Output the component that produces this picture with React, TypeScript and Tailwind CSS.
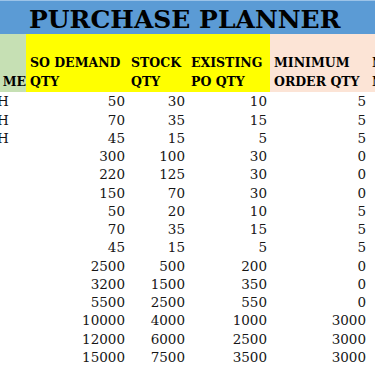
// Purchase planner sheet excerpt

const rows: [number, number, number, number][] = [
  [50, 30, 10, 5],
  [70, 35, 15, 5],
  [45, 15, 5, 5],
  [300, 100, 30, 0],
  [220, 125, 30, 0],
  [150, 70, 30, 0],
  [50, 20, 10, 5],
  [70, 35, 15, 5],
  [45, 15, 5, 5],
  [2500, 500, 200, 0],
  [3200, 1500, 350, 0],
  [5500, 2500, 550, 0],
  [10000, 4000, 1000, 3000],
  [12000, 6000, 2500, 3000],
  [15000, 7500, 3500, 3000],
]

const cols = 'grid grid-cols-[26px_102px_60px_82px_100px_1fr]'

export default function App() {
  return (
    <div
      className="h-[366px] w-[375px] overflow-hidden bg-white text-black"
      style={{ fontFamily: '"DejaVu Serif", "Liberation Serif", serif' }}
    >
      {/* Title */}
      <div className="flex h-[34px] items-center border-t border-[#9cc3e8] bg-[#5b9bd5] pl-[29px] pt-[3px]">
        <h1 className="whitespace-nowrap text-[25px] font-bold leading-none">
          PURCHASE PLANNER
        </h1>
      </div>

      {/* Header */}
      <div className={`${cols} h-[58px] text-[12.5px] font-bold leading-[18.5px]`}>
        <div className="flex items-end justify-end overflow-hidden bg-[#c6e0b4] pb-[1px]">
          <span className="whitespace-nowrap">ME</span>
        </div>
        <div className="flex items-end bg-[#ffff00] pb-[1px] pl-[4px]">
          <span>
            SO DEMAND
            <br />
            QTY
          </span>
        </div>
        <div className="flex items-end bg-[#ffff00] pb-[1px] pl-[3px]">
          <span>
            STOCK
            <br />
            QTY
          </span>
        </div>
        <div className="flex items-end bg-[#ffff00] pb-[1px] pl-[3px]">
          <span className="whitespace-nowrap">
            EXISTING
            <br />
            PO QTY
          </span>
        </div>
        <div className="flex items-end bg-[#fce4d6] pb-[1px] pl-[4px]">
          <span className="whitespace-nowrap">
            MINIMUM
            <br />
            ORDER QTY
          </span>
        </div>
        <div className="flex items-end overflow-hidden bg-[#fce4d6] pb-[1px] pl-[2px]">
          <span className="whitespace-nowrap">
            NET
            <br />
            NEED
          </span>
        </div>
      </div>

      {/* Rows */}
      <div className="pt-[1px] text-[13.5px] text-[#161616]">
        {rows.map((r, i) => (
          <div key={i} className={`${cols} h-[18.25px] items-center leading-none`}>
            <div className="overflow-hidden">
              {i < 3 && <span className="-ml-[3px]">H</span>}
            </div>
            <div className="pr-[3px] text-right">{r[0]}</div>
            <div className="pr-[3px] text-right">{r[1]}</div>
            <div className="pr-[3px] text-right">{r[2]}</div>
            <div className="pr-[4px] text-right">{r[3]}</div>
            <div />
          </div>
        ))}
      </div>
    </div>
  )
}
